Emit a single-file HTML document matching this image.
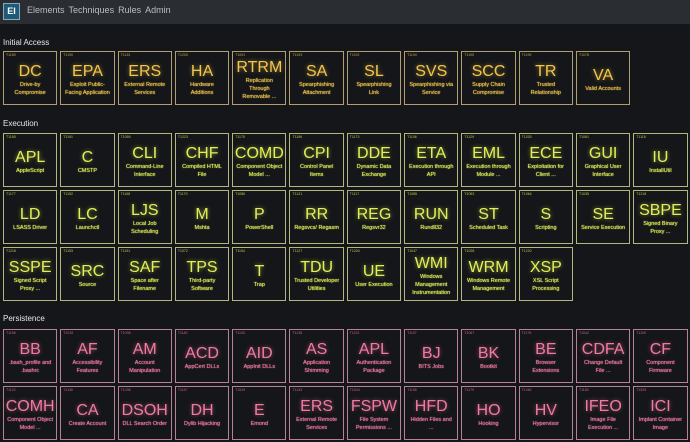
<!DOCTYPE html>
<html><head><meta charset="utf-8"><style>
*{margin:0;padding:0;box-sizing:border-box}
body{width:690px;height:442px;overflow:hidden;background:#14161a;font-family:"Liberation Sans",sans-serif;position:relative}
.nav{position:absolute;left:0;top:0;width:690px;height:24px;background:#2a2d32}
.logo{position:absolute;left:3px;top:3px;width:17px;height:17px;background:#1c5a78;border:1px solid #8ab;color:#fff;font-size:9px;font-weight:bold;text-align:center;line-height:15px}
.links{position:absolute;left:27px;top:5px;font-size:9px;color:#b9bec6;word-spacing:1px}
.links span{margin-right:4px}
.h{position:absolute;left:3px;font-size:8px;color:#e8e8e8}
.grid{position:absolute;left:3px;display:grid;grid-template-columns:repeat(12,54.3px);grid-auto-rows:54px;gap:3px}
.t{border:1px solid;position:relative;display:flex;flex-direction:column;align-items:center;justify-content:center;text-align:center;background:#141619;padding:4px 2px 0}
.t i{position:absolute;left:2px;top:1px;font-style:normal;font-size:3.5px;opacity:.8}
.t b{font-weight:normal;font-size:16px;line-height:18px}
.t s{text-decoration:none;font-size:5.5px;line-height:8px;text-shadow:0 0 1px currentColor}
.ia .t{border-color:#b09e70;color:#f2c54c}
.ia b{text-shadow:0 0 4px rgba(240,190,60,.6)}
.ex .t{border-color:#b3b67e;color:#e2ef58}
.ex b{text-shadow:0 0 4px rgba(220,240,80,.6)}
.pe .t{border-color:#b58294;color:#f27aa2}
.pe b{text-shadow:0 0 4px rgba(240,110,150,.6)}
</style></head><body>
<div class="nav"><div class="logo">EI</div><div class="links"><span>Elements</span><span>Techniques</span><span>Rules</span><span>Admin</span></div></div>
<div class="h" style="top:38px">Initial Access</div>
<div class="grid ia" style="top:51px">
<div class="t"><i>T1189</i><b>DC</b><s>Drive-by<br>Compromise</s></div>
<div class="t"><i>T1190</i><b>EPA</b><s>Exploit Public-<br>Facing Application</s></div>
<div class="t"><i>T1133</i><b>ERS</b><s>External Remote<br>Services</s></div>
<div class="t"><i>T1200</i><b>HA</b><s>Hardware<br>Additions</s></div>
<div class="t"><i>T1091</i><b>RTRM</b><s>Replication<br>Through<br>Removable ...</s></div>
<div class="t"><i>T1193</i><b>SA</b><s>Spearphishing<br>Attachment</s></div>
<div class="t"><i>T1192</i><b>SL</b><s>Spearphishing<br>Link</s></div>
<div class="t"><i>T1194</i><b>SVS</b><s>Spearphishing via<br>Service</s></div>
<div class="t"><i>T1195</i><b>SCC</b><s>Supply Chain<br>Compromise</s></div>
<div class="t"><i>T1199</i><b>TR</b><s>Trusted<br>Relationship</s></div>
<div class="t"><i>T1078</i><b>VA</b><s>Valid Accounts</s></div>
</div>
<div class="h" style="top:119px">Execution</div>
<div class="grid ex" style="top:133px">
<div class="t"><i>T1155</i><b>APL</b><s>AppleScript</s></div>
<div class="t"><i>T1191</i><b>C</b><s>CMSTP</s></div>
<div class="t"><i>T1059</i><b>CLI</b><s>Command-Line<br>Interface</s></div>
<div class="t"><i>T1223</i><b>CHF</b><s>Compiled HTML<br>File</s></div>
<div class="t"><i>T1175</i><b>COMD</b><s>Component Object<br>Model ...</s></div>
<div class="t"><i>T1196</i><b>CPI</b><s>Control Panel<br>Items</s></div>
<div class="t"><i>T1173</i><b>DDE</b><s>Dynamic Data<br>Exchange</s></div>
<div class="t"><i>T1106</i><b>ETA</b><s>Execution through<br>API</s></div>
<div class="t"><i>T1129</i><b>EML</b><s>Execution through<br>Module ...</s></div>
<div class="t"><i>T1203</i><b>ECE</b><s>Exploitation for<br>Client ...</s></div>
<div class="t"><i>T1061</i><b>GUI</b><s>Graphical User<br>Interface</s></div>
<div class="t"><i>T1118</i><b>IU</b><s>InstallUtil</s></div>
<div class="t"><i>T1177</i><b>LD</b><s>LSASS Driver</s></div>
<div class="t"><i>T1152</i><b>LC</b><s>Launchctl</s></div>
<div class="t"><i>T1168</i><b>LJS</b><s>Local Job<br>Scheduling</s></div>
<div class="t"><i>T1170</i><b>M</b><s>Mshta</s></div>
<div class="t"><i>T1086</i><b>P</b><s>PowerShell</s></div>
<div class="t"><i>T1121</i><b>RR</b><s>Regsvcs/ Regasm</s></div>
<div class="t"><i>T1117</i><b>REG</b><s>Regsvr32</s></div>
<div class="t"><i>T1085</i><b>RUN</b><s>Rundll32</s></div>
<div class="t"><i>T1053</i><b>ST</b><s>Scheduled Task</s></div>
<div class="t"><i>T1064</i><b>S</b><s>Scripting</s></div>
<div class="t"><i>T1035</i><b>SE</b><s>Service Execution</s></div>
<div class="t"><i>T1218</i><b>SBPE</b><s>Signed Binary<br>Proxy ...</s></div>
<div class="t"><i>T1216</i><b>SSPE</b><s>Signed Script<br>Proxy ...</s></div>
<div class="t"><i>T1153</i><b>SRC</b><s>Source</s></div>
<div class="t"><i>T1151</i><b>SAF</b><s>Space after<br>Filename</s></div>
<div class="t"><i>T1072</i><b>TPS</b><s>Third-party<br>Software</s></div>
<div class="t"><i>T1154</i><b>T</b><s>Trap</s></div>
<div class="t"><i>T1127</i><b>TDU</b><s>Trusted Developer<br>Utilities</s></div>
<div class="t"><i>T1204</i><b>UE</b><s>User Execution</s></div>
<div class="t"><i>T1047</i><b>WMI</b><s>Windows<br>Management<br>Instrumentation</s></div>
<div class="t"><i>T1028</i><b>WRM</b><s>Windows Remote<br>Management</s></div>
<div class="t"><i>T1220</i><b>XSP</b><s>XSL Script<br>Processing</s></div>
</div>
<div class="h" style="top:314px">Persistence</div>
<div class="grid pe" style="top:329px">
<div class="t"><i>T1156</i><b>BB</b><s>.bash_profile and<br>.bashrc</s></div>
<div class="t"><i>T1015</i><b>AF</b><s>Accessibility<br>Features</s></div>
<div class="t"><i>T1098</i><b>AM</b><s>Account<br>Manipulation</s></div>
<div class="t"><i>T1182</i><b>ACD</b><s>AppCert DLLs</s></div>
<div class="t"><i>T1103</i><b>AID</b><s>AppInit DLLs</s></div>
<div class="t"><i>T1138</i><b>AS</b><s>Application<br>Shimming</s></div>
<div class="t"><i>T1131</i><b>APL</b><s>Authentication<br>Package</s></div>
<div class="t"><i>T1197</i><b>BJ</b><s>BITS Jobs</s></div>
<div class="t"><i>T1067</i><b>BK</b><s>Bootkit</s></div>
<div class="t"><i>T1176</i><b>BE</b><s>Browser<br>Extensions</s></div>
<div class="t"><i>T1042</i><b>CDFA</b><s>Change Default<br>File ...</s></div>
<div class="t"><i>T1109</i><b>CF</b><s>Component<br>Firmware</s></div>
<div class="t"><i>T1122</i><b>COMH</b><s>Component Object<br>Model ...</s></div>
<div class="t"><i>T1136</i><b>CA</b><s>Create Account</s></div>
<div class="t"><i>T1038</i><b>DSOH</b><s>DLL Search Order</s></div>
<div class="t"><i>T1157</i><b>DH</b><s>Dylib Hijacking</s></div>
<div class="t"><i>T1519</i><b>E</b><s>Emond</s></div>
<div class="t"><i>T1133</i><b>ERS</b><s>External Remote<br>Services</s></div>
<div class="t"><i>T1044</i><b>FSPW</b><s>File System<br>Permissions ...</s></div>
<div class="t"><i>T1158</i><b>HFD</b><s>Hidden Files and<br>...</s></div>
<div class="t"><i>T1179</i><b>HO</b><s>Hooking</s></div>
<div class="t"><i>T1062</i><b>HV</b><s>Hypervisor</s></div>
<div class="t"><i>T1183</i><b>IFEO</b><s>Image File<br>Execution ...</s></div>
<div class="t"><i>T1525</i><b>ICI</b><s>Implant Container<br>Image</s></div>
</div>
</body></html>
